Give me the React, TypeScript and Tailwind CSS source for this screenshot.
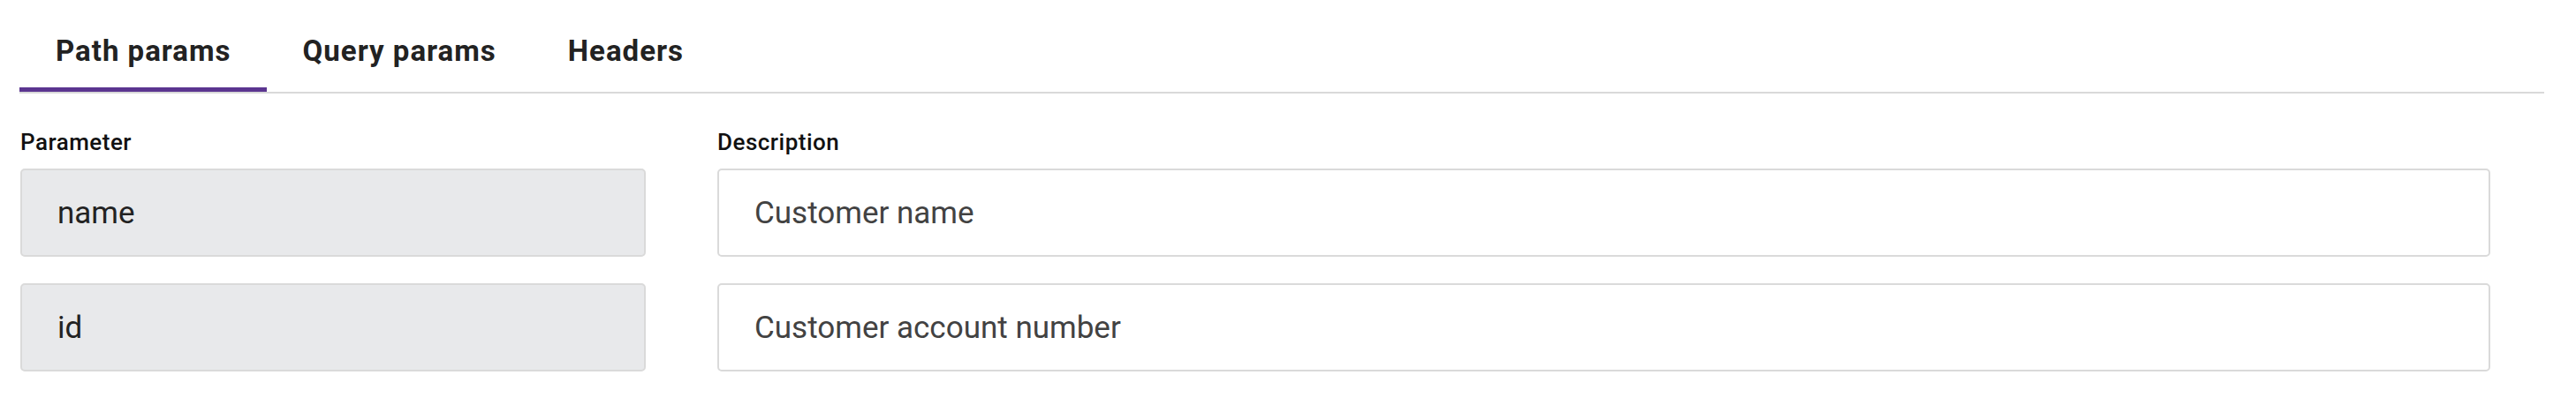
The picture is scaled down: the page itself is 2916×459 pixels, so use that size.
import { useState } from "react";

const tabs = ["Path params", "Query params", "Headers"];

const params = [
  { name: "name", description: "Customer name" },
  { name: "id", description: "Customer account number" },
];

export default function App() {
  const [active, setActive] = useState(0);

  return (
    <div className="min-h-screen bg-white pl-[22px] pr-[36px] font-['Roboto',sans-serif]">
      {/* Tabs */}
      <div className="flex border-b-2 border-[#d9d9d9]">
        {tabs.map((tab, i) => (
          <button
            key={tab}
            onClick={() => setActive(i)}
            className={`pl-[41px] pr-[40px] pt-[34px] pb-[17px] text-[33px] leading-[48px] tracking-[1px] font-bold text-[#222] border-b-[5px] ${
              active === i ? "border-[#5b3590]" : "border-transparent"
            }`}
          >
            {tab}
          </button>
        ))}
      </div>

      {/* Params table */}
      <div className="ml-px mt-[37px] grid grid-cols-[708px_2007px] gap-x-[81px]">
        <div className="text-[26px] leading-[36px] tracking-[0.5px] font-medium text-[#111]">Parameter</div>
        <div className="text-[26px] leading-[36px] tracking-[0.5px] font-medium text-[#111]">Description</div>
      </div>
      <div className="ml-px mt-[12px] flex flex-col gap-[30px]">
        {params.map((p) => (
          <div key={p.name} className="grid grid-cols-[708px_2007px] gap-x-[81px]">
            <input
              type="text"
              readOnly
              value={p.name}
              className="h-[100px] rounded-[5px] border-2 border-[#dadada] bg-[#e8e9eb] px-[40px] text-[35px] text-[#222] outline-none"
            />
            <input
              type="text"
              defaultValue={p.description}
              className="h-[100px] rounded-[5px] border-2 border-[#dadada] bg-white px-[40px] text-[35px] text-[#424242] outline-none"
            />
          </div>
        ))}
      </div>
    </div>
  );
}
